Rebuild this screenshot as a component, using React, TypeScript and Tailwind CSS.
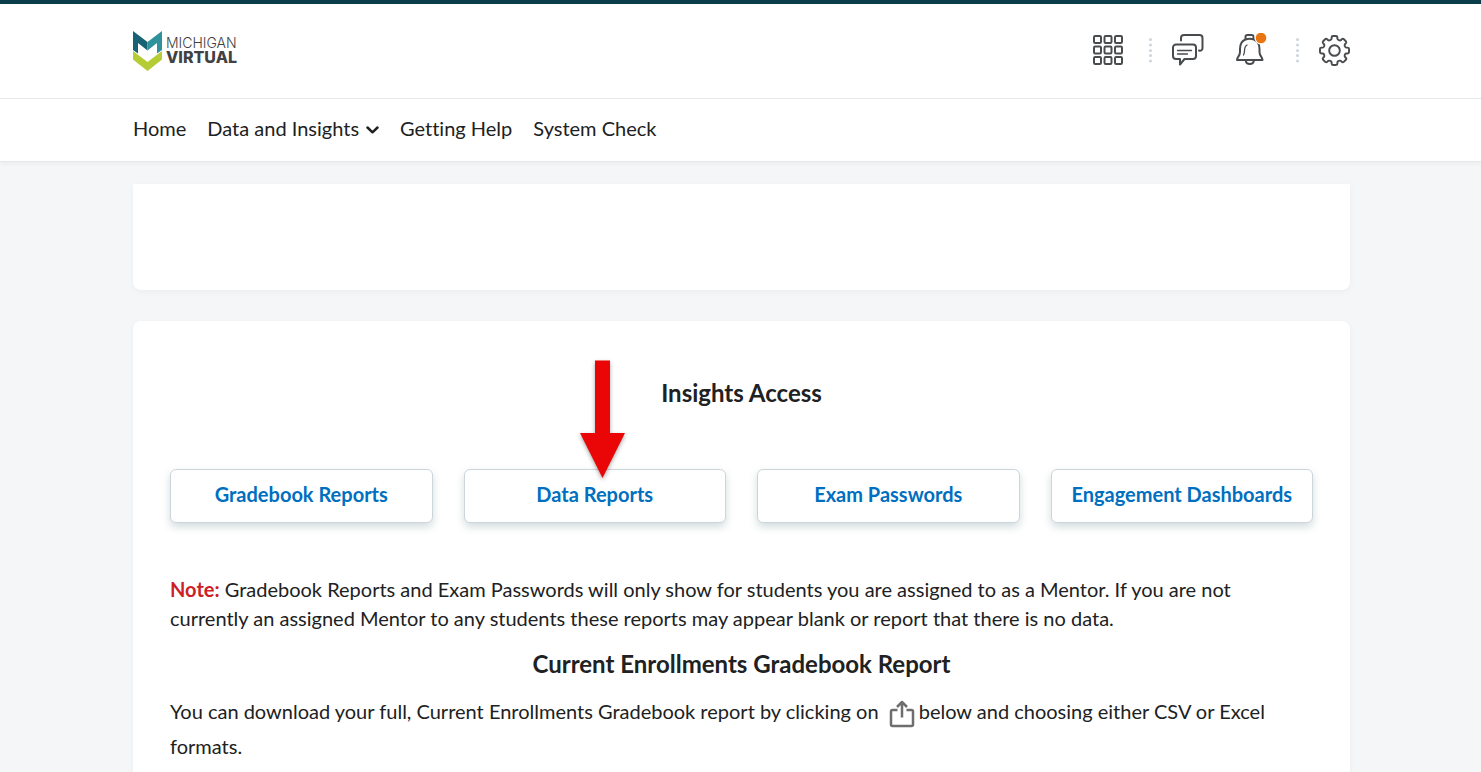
import React from "react";

const reports = ["Gradebook Reports", "Data Reports", "Exam Passwords", "Engagement Dashboards"];

function Logo() {
  return (
    <a href="#home" aria-label="Michigan Virtual home" className="flex items-center gap-1">
      <svg width="29" height="40" viewBox="0 0 29 40" aria-hidden="true">
        <path d="M0 0 14.500 11V19.500L5 12V22.500L0 19Z" fill="#176273" />
        <path d="M29 0 14.500 11V19.500L24 12V22.500L29 19Z" fill="#2f929b" />
        <path d="M0 20 14.500 31 29 20V28.500L14.500 40 0 28.500Z" fill="#b5cc34" />
      </svg>
      <span className="flex flex-col pb-0.5 text-[#3f4142]">
        <span className="font-['Inter'] text-[14px] leading-[14px] font-light">MICHIGAN</span>
        <span className="font-['Inter'] text-[16px] leading-[14px] font-extrabold">VIRTUAL</span>
      </span>
    </a>
  );
}

function Dots() {
  return (
    <svg width="3" height="25" viewBox="0 0 3 25" fill="#cdd5dc" aria-hidden="true">
      {[1.5, 7, 12.5, 17.5, 23].map((y) => (
        <circle key={y} cx="1.5" cy={y} r="1.5" />
      ))}
    </svg>
  );
}

function GridIcon() {
  return (
    <svg width="30" height="30" viewBox="0 0 30 30" fill="none" stroke="#494c4e" strokeWidth="2" aria-hidden="true">
      {[1, 11.5, 22].map((y) =>
        [1, 11.5, 22].map((x) => <rect key={`${x}-${y}`} x={x} y={y} width="7" height="7" rx="1.2" />)
      )}
    </svg>
  );
}

function ChatIcon() {
  return (
    <svg width="32" height="32" viewBox="0 0 32 32" fill="none" stroke="#494c4e" strokeWidth="2" strokeLinecap="round" strokeLinejoin="round" aria-hidden="true">
      <path d="M9 6.500V4a3 3 0 0 1 3-3h15.500a3 3 0 0 1 3 3v10a2.500 2.500 0 0 1-3.500 2.500" />
      <path d="M4 10.500h17a3 3 0 0 1 3 3V22a3 3 0 0 1-3 3h-8.500L8 30.500V25H4a3 3 0 0 1-3-3v-8.500a3 3 0 0 1 3-3Z" />
      <path d="M5.500 16.500h14M5.500 20h10" strokeWidth="1.300" />
    </svg>
  );
}

function BellIcon() {
  return (
    <svg width="32" height="34" viewBox="0 0 32 34" fill="none" stroke="#494c4e" strokeWidth="2" strokeLinecap="round" strokeLinejoin="round" aria-hidden="true">
      <path d="M9.500 6V3.800c0-1 .8-1.800 2-1.800h4c1.200 0 2 .8 2 1.800V6" />
      <path d="M9.500 6.500C5.500 8 4 11.500 4 16v3c0 4-3 5-3 8h25.500c0-3-3-4-3-8v-3c0-4.500-1.500-8-5.500-9.500-2.500-1-6-1-8.500 0Z" />
      <path d="M11 12c-2 1.200-2.500 4-2.500 6 0 1.500-.3 2.800-1 4" strokeWidth="1.300" />
      <path d="M9.800 28c.5 4 7.500 4 8 0" />
      <circle cx="25" cy="5" r="6.500" fill="#fff" stroke="none" />
      <circle cx="25" cy="5" r="5.300" fill="#e87511" stroke="none" />
    </svg>
  );
}

function GearIcon() {
  return (
    <svg width="31" height="31" viewBox="0 0 32 32" fill="none" stroke="#494c4e" strokeWidth="2" strokeLinejoin="round" aria-hidden="true">
      <circle cx="16" cy="16" r="5.500" />
      <path d="M13 4V2.500c0-1 .5-1.500 1.500-1.500h3c1 0 1.500.5 1.500 1.500V4c.2 1 2.500 2 3.500 1.400l1-1c.8-.7 1.500-.7 2.200 0l2 2c.7.700.7 1.400 0 2.200l-1 1c-.7 1 .2 3.200 1.300 3.400h1.500c1 0 1.500.5 1.500 1.500v3c0 1-.5 1.500-1.500 1.500H28c-1.100.2-2 2.500-1.300 3.500l1 1c.7.700.7 1.400 0 2.100l-2.100 2.100c-.7.700-1.400.7-2.100 0l-1-1C21.500 26 19.200 27 19 28v1.500c0 1-.5 1.500-1.500 1.500h-3c-1 0-1.500-.5-1.500-1.500V28c-.2-1-2.500-2-3.500-1.300l-1 1c-.7.700-1.400.7-2.100 0l-2.100-2.100c-.7-.7-.7-1.400 0-2.100l1-1C6 21.500 5.100 19.200 4 19H2.500C1.500 19 1 18.500 1 17.500v-3c0-1 .5-1.500 1.500-1.500H4c1.100-.2 2-2.400 1.300-3.400l-1-1c-.7-.8-.7-1.500 0-2.200l2-2c.7-.7 1.400-.7 2.200 0l1 1C10.500 6 12.800 5 13 4Z" />
    </svg>
  );
}

function ShareIcon() {
  return (
    <svg className="mr-1 ml-[5px] inline-block align-[-9px]" width="26" height="28" viewBox="0 0 26 28" fill="none" stroke="#6e6e6e" strokeWidth="2.500" strokeLinejoin="round" role="img" aria-label="the export icon">
      <path d="M8.500 10H3.500Q2 10 2 11.500V24.500Q2 26 3.500 26H22.500Q24 26 24 24.500V11.500Q24 10 22.500 10H17.500M13 17.500V2.500M8 7l5-5 5 5" />
    </svg>
  );
}

function Arrow() {
  return (
    <svg className="pointer-events-none absolute -top-[109px] left-[116px] z-10 overflow-visible drop-shadow-[0_2px_2px_rgba(0,0,0,0.35)]" width="45" height="118" viewBox="0 0 45 118" aria-hidden="true">
      <path d="M15 0.500H30V73H45L22.500 118 0 73H15Z" fill="#ea0606" />
    </svg>
  );
}

export default function App() {
  return (
    <div className="flex min-h-screen flex-col bg-[#f5f6f8] font-['Lato',sans-serif] text-[#202122] [font-variant-ligatures:none]">
      <header className="border-t-4 border-[#0a3c49] bg-white shadow-[0_2px_4px_rgba(0,0,0,0.04)]">
        <div className="flex h-[94px] items-center justify-between pr-[131px] pl-[133px]">
          <Logo />
          <div className="flex items-center pb-0.5">
            <button type="button" aria-label="Select a course"><GridIcon /></button>
            <span className="mr-5 ml-[26px]"><Dots /></span>
            <button type="button" aria-label="Message alerts"><ChatIcon /></button>
            <button type="button" aria-label="Update alerts" className="ml-8"><BellIcon /></button>
            <span className="mr-5 ml-7"><Dots /></span>
            <button type="button" aria-label="Settings"><GearIcon /></button>
          </div>
        </div>
        <nav className="flex h-16 items-center gap-[21px] border-y border-[#e6e8eb] pr-[131px] pb-1 pl-[133px] text-[20px] leading-7">
          <a href="#home">Home</a>
          <button type="button" className="flex items-center gap-[7px]">
            Data and Insights
            <svg className="mt-1" width="13" height="8" viewBox="0 0 13 8" fill="none" stroke="#202122" strokeWidth="2.500" strokeLinecap="round" strokeLinejoin="round" aria-hidden="true">
              <path d="M1.500 1.500 6.500 6.300 11.500 1.500" />
            </svg>
          </button>
          <a href="#help">Getting Help</a>
          <a href="#check">System Check</a>
        </nav>
      </header>
      <main className="flex grow flex-col gap-[31px] pt-[22px] pr-[131px] pl-[133px]">
        <section className="h-[106px] rounded-b-lg bg-white shadow-[0_2px_6px_rgba(0,0,0,0.04)]" />
        <section className="grow rounded-t-lg bg-white px-[37px] pt-14 shadow-[0_2px_6px_rgba(0,0,0,0.04)]">
          <h2 className="text-center text-[24px] leading-8 font-bold">Insights Access</h2>
          <div className="mt-[60px] grid grid-cols-4 gap-[31px]">
            {reports.map((name) => (
              <div key={name} className="relative">
                {name === "Data Reports" && <Arrow />}
                <a href="#report" className="flex h-[54px] items-center justify-center rounded-md border border-[#cdd5dc] bg-white pb-1 text-[20px] leading-7 font-bold whitespace-nowrap text-[#006fbf] shadow-[0_4px_8px_rgba(0,59,73,0.18)]">
                  {name}
                </a>
              </div>
            ))}
          </div>
          <p className="mt-[52px] text-[20px] leading-[29px]">
            <strong className="text-[#cd2026]">Note:</strong> Gradebook Reports and Exam Passwords will only show for students you are assigned to as a Mentor. If you are not currently an assigned Mentor to any students these reports may appear blank or report that there is no data.
          </p>
          <h2 className="mt-[15px] text-center text-[24px] leading-8 font-bold">Current Enrollments Gradebook Report</h2>
          <p className="mt-[14px] text-[20px] leading-[35px]">
            You can download your full, Current Enrollments Gradebook report by clicking on <ShareIcon />below and choosing either CSV or Excel formats.
          </p>
        </section>
      </main>
    </div>
  );
}
